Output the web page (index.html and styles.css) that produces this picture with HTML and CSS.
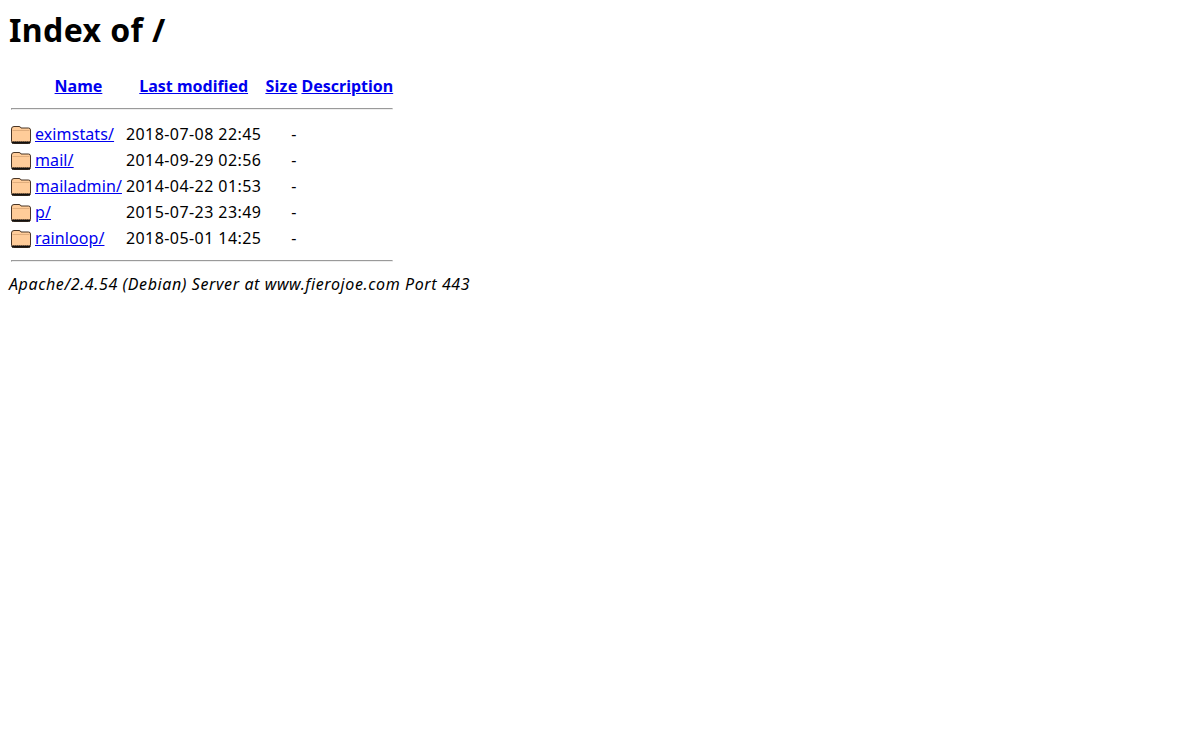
FILE: index.html
```html
<!DOCTYPE html>
<html>
<head>
<meta charset="utf-8">
<title>Index of /</title>
<link rel="stylesheet" href="styles.css">
</head>
<body>
<h1>Index of /</h1>
<table>
<tr><th class="icon-col"></th><th><a href="#">Name</a></th><th><a href="#">Last modified</a></th><th class="size-head"><a href="#">Size</a></th><th><a href="#">Description</a></th></tr>
<tr><th colspan="5"><hr class="rule-top"></th></tr>
<tr><td class="icon-col"><svg class="folder" viewBox="0 0 20 22"><use href="#folder-icon"/></svg></td><td class="name"><a href="#">eximstats/</a></td><td class="date">2018-07-08 22:45</td><td class="size">- </td><td></td></tr>
<tr><td class="icon-col"><svg class="folder" viewBox="0 0 20 22"><use href="#folder-icon"/></svg></td><td class="name"><a href="#">mail/</a></td><td class="date">2014-09-29 02:56</td><td class="size">- </td><td></td></tr>
<tr><td class="icon-col"><svg class="folder" viewBox="0 0 20 22"><use href="#folder-icon"/></svg></td><td class="name"><a href="#">mailadmin/</a></td><td class="date">2014-04-22 01:53</td><td class="size">- </td><td></td></tr>
<tr><td class="icon-col"><svg class="folder" viewBox="0 0 20 22"><use href="#folder-icon"/></svg></td><td class="name"><a href="#">p/</a></td><td class="date">2015-07-23 23:49</td><td class="size">- </td><td></td></tr>
<tr><td class="icon-col"><svg class="folder" viewBox="0 0 20 22"><use href="#folder-icon"/></svg></td><td class="name"><a href="#">rainloop/</a></td><td class="date">2018-05-01 14:25</td><td class="size">- </td><td></td></tr>
<tr><th colspan="5"><hr></th></tr>
</table>
<address>Apache/2.4.54 (Debian) Server at www.fierojoe.com Port 443</address>
<svg class="defs" aria-hidden="true"><defs><g id="folder-icon">
<path d="M0.5 6 Q0.5 3.5 3 3.5 H8 Q9.5 3.5 10 5 H17.5 Q19.5 5 19.5 7 V18.5 Q19.5 20.5 17.5 20.5 H2.5 Q0.5 20.5 0.5 18.5 Z" fill="#ffcc99" stroke="#4a3626" stroke-width="1"/>
<path d="M1.5 7.5 H18.5" stroke="#e0ad7c" stroke-width="1" fill="none"/>
<path d="M1 19.5 H19" stroke="#111" stroke-width="2" fill="none"/>
<path d="M2 18.5 H19" stroke="#6b4d33" stroke-width="1" stroke-dasharray="1 1" fill="none"/>
</g></defs></svg>
</body>
</html>
```
FILE: styles.css
```css
body {
  font-family: "Noto Sans", sans-serif;
  font-size: 16px;
  color: #000;
  background: #fff;
}
h1 {
  font-size: 32px;
  line-height: 44px;
  letter-spacing: 0.4px;
  margin: 0 0 20px;
  padding-left: 1px;
}
th, td {
  padding: 1px;
  line-height: 22px;
}
td {
  height: 22px;
}
.icon-col {
  width: 20px;
}
.name {
  letter-spacing: 0.1px;
}
.date {
  text-align: right;
  letter-spacing: 0.43px;
}
.size {
  text-align: right;
  padding-right: 2px;
}
.size-head {
  letter-spacing: 0.25px;
}
.folder {
  display: block;
  width: 20px;
  height: 22px;
}
hr {
  margin: 7px 0 8px;
}
.rule-top {
  margin-bottom: 9px;
}
address {
  line-height: 22px;
  letter-spacing: 0.6px;
  padding-left: 1px;
}
.defs {
  display: none;
}
```
